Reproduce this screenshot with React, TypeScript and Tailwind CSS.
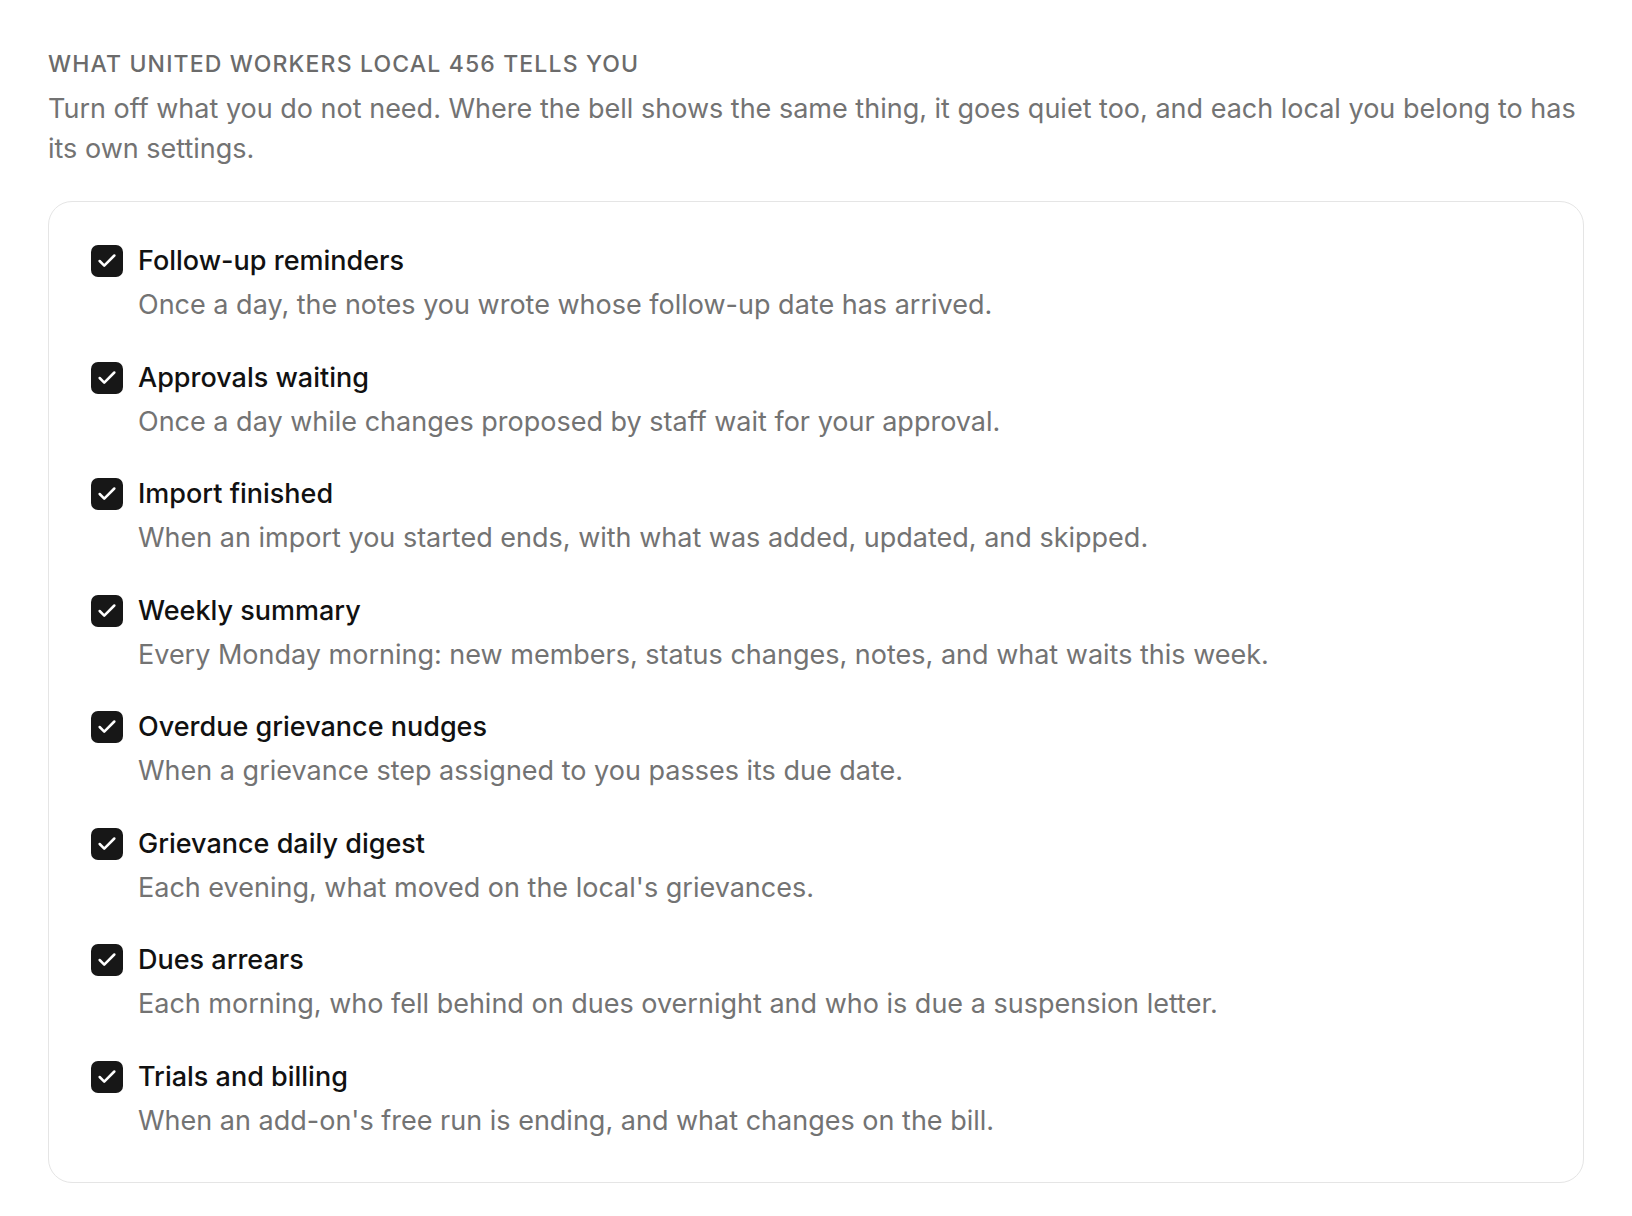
import { Check } from "lucide-react";

const items = [
  { title: "Follow-up reminders", body: "Once a day, the notes you wrote whose follow-up date has arrived." },
  { title: "Approvals waiting", body: "Once a day while changes proposed by staff wait for your approval." },
  { title: "Import finished", body: "When an import you started ends, with what was added, updated, and skipped." },
  { title: "Weekly summary", body: "Every Monday morning: new members, status changes, notes, and what waits this week." },
  { title: "Overdue grievance nudges", body: "When a grievance step assigned to you passes its due date." },
  { title: "Grievance daily digest", body: "Each evening, what moved on the local's grievances." },
  { title: "Dues arrears", body: "Each morning, who fell behind on dues overnight and who is due a suspension letter." },
  { title: "Trials and billing", body: "When an add-on's free run is ending, and what changes on the bill." },
];

export default function App() {
  return (
    <main className="min-h-screen bg-white px-12 pt-[50px] font-['Inter',sans-serif]">
      <h2 className="text-[23px] leading-[28px] font-medium uppercase tracking-[0.05em] text-[#6b6b6b]">
        What United Workers Local 456 tells you
      </h2>
      <p className="mt-[11px] text-[27px] leading-[40px] text-[#737373]">
        Turn off what you do not need. Where the bell shows the same thing, it goes quiet too, and each local you belong to has its own settings.
      </p>

      <section className="mt-8 flex flex-col gap-[32.5px] rounded-3xl border border-[#e5e5e5] pl-[42px] pr-10 pt-[39px] pb-[41px]">
        {items.map((item) => (
          <label key={item.title} className="flex flex-col">
            <div className="flex items-center gap-[15px]">
              <span
                role="checkbox"
                aria-checked="true"
                className="flex h-8 w-8 shrink-0 items-center justify-center rounded-[7px] bg-[#171717] text-white"
              >
                <Check size={22} strokeWidth={2.75} />
              </span>
              <span className="text-[27px] leading-[40px] font-medium text-[#111111]">{item.title}</span>
            </div>
            <p className="mt-1 pl-[47px] text-[27px] leading-[40px] text-[#737373]">{item.body}</p>
          </label>
        ))}
      </section>
    </main>
  );
}
